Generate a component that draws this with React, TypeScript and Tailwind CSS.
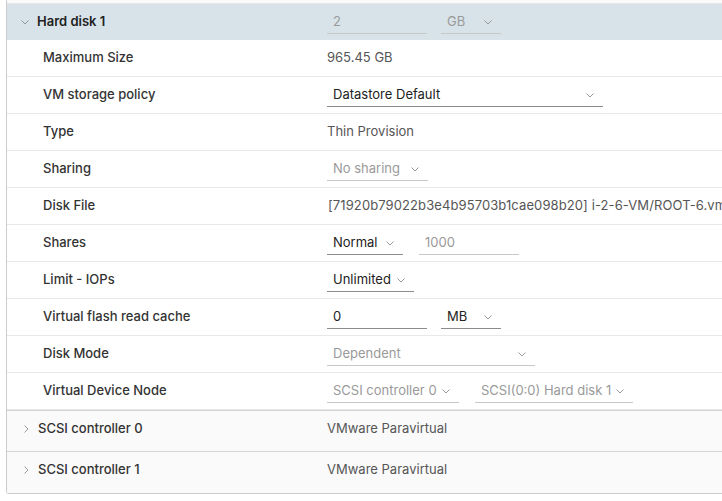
import React from "react"

const font = { fontFamily: "Inter, 'Noto Sans', sans-serif" }

function Chevron({ dir = "down", className = "" }: { dir?: "down" | "right"; className?: string }) {
  return (
    <svg
      width="10"
      height="10"
      viewBox="0 0 10 10"
      className={className}
      fill="none"
      stroke="currentColor"
      strokeWidth="1"
    >
      {dir === "down" ? <polyline points="1.5,3.5 5,7 8.5,3.5" /> : <polyline points="3.5,1.5 7,5 3.5,8.5" />}
    </svg>
  )
}

function Input({ value, w, disabled = false }: { value: string; w: string; disabled?: boolean }) {
  return (
    <div
      className={`${w} h-[24px] flex items-center px-[6px] border-b ${
        disabled ? "text-[#9a9a9a] border-[#c8c8c8]" : "text-[#222] border-[#8c8c8c]"
      }`}
    >
      {value}
    </div>
  )
}

function Select({ value, w, disabled = false }: { value: string; w: string; disabled?: boolean }) {
  return (
    <div
      className={`${w} h-[24px] flex items-center justify-between pl-[6px] pr-[8px] border-b ${
        disabled ? "text-[#9a9a9a] border-[#c8c8c8]" : "text-[#222] border-[#8c8c8c]"
      }`}
    >
      <span className="whitespace-nowrap">{value}</span>
      <Chevron className="text-[#9a9a9a] shrink-0" />
    </div>
  )
}

function Row({ label, children }: { label: string; children: React.ReactNode }) {
  return (
    <div className="h-[37px] flex items-center border-b border-[#e8e8e8] bg-white">
      <div className="w-[320px] pl-[36px] shrink-0 font-medium text-[#333]">{label}</div>
      <div className="flex items-center gap-[16px] text-[#565656] whitespace-nowrap overflow-hidden">{children}</div>
    </div>
  )
}

export default function App() {
  return (
    <div className="w-[722px] h-[501px] overflow-hidden bg-white text-[13px]" style={font}>
      <div className="ml-[6px] w-[780px] border-l border-[#cccccc] rounded-bl-[3px] border-b">
        <div className="h-[4px] bg-[#fafafa] border-b border-[#e8e8e8]" />

        {/* Hard disk header */}
        <div className="h-[36px] flex items-center bg-[#d8e3e9]">
          <div className="w-[320px] shrink-0 flex items-center pl-[13px] gap-[7px]">
            <Chevron className="text-[#8a9aa4]" />
            <span className="font-semibold text-[#222]">Hard disk 1</span>
          </div>
          <div className="flex items-center gap-[14px]">
            <Input value="2" w="w-[100px]" disabled />
            <Select value="GB" w="w-[60px]" disabled />
          </div>
        </div>

        <Row label="Maximum Size">965.45 GB</Row>
        <Row label="VM storage policy">
          <Select value="Datastore Default" w="w-[276px]" />
        </Row>
        <Row label="Type">Thin Provision</Row>
        <Row label="Sharing">
          <Select value="No sharing" w="w-[101px]" disabled />
        </Row>
        <Row label="Disk File">
          <span className="pl-[1px] tracking-[0.1px]">[71920b79022b3e4b95703b1cae098b20] i-2-6-VM/ROOT-6.vmdk</span>
        </Row>
        <Row label="Shares">
          <Select value="Normal" w="w-[76px]" />
          <Input value="1000" w="w-[100px]" disabled />
        </Row>
        <Row label="Limit - IOPs">
          <Select value="Unlimited" w="w-[87px]" />
        </Row>
        <Row label="Virtual flash read cache">
          <div className="flex items-center gap-[14px]">
            <Input value="0" w="w-[100px]" />
            <Select value="MB" w="w-[60px]" />
          </div>
        </Row>
        <Row label="Disk Mode">
          <Select value="Dependent" w="w-[208px]" disabled />
        </Row>
        <Row label="Virtual Device Node">
          <Select value="SCSI controller 0" w="w-[132px]" disabled />
          <Select value="SCSI(0:0) Hard disk 1" w="w-[158px]" disabled />
        </Row>

        {/* SCSI controllers */}
        {["SCSI controller 0", "SCSI controller 1"].map((name, i) => (
          <div
            key={name}
            className={`${i === 0 ? "h-[42px] border-t border-b border-[#d4d4d4]" : "h-[41px]"} flex items-start pt-[8px] bg-[#fafafa]`}
          >
            <div className="w-[320px] shrink-0 flex items-center pl-[14px] gap-[7px]">
              <Chevron dir="right" className="text-[#9a9a9a]" />
              <span className="font-medium text-[#333]">{name}</span>
            </div>
            <span className="text-[#565656]">VMware Paravirtual</span>
          </div>
        ))}
      </div>
    </div>
  )
}
